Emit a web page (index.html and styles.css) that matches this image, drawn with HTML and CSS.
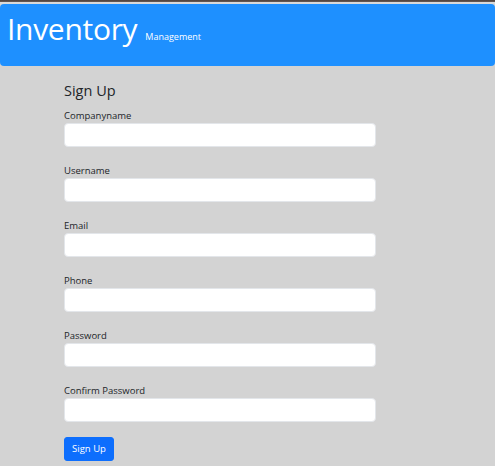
FILE: index.html
```html
<!DOCTYPE html>
<html lang="en">
<head>
<meta charset="utf-8">
<title>Inventory Management - Sign Up</title>
<link rel="stylesheet" href="styles.css">
</head>
<body>
<div class="chrome"></div>
<header class="topbar">
  <h1 class="brand">Inventory</h1>
  <span class="tagline">Management</span>
</header>
<main class="content">
  <form class="signup">
    <h2 class="title">Sign Up</h2>
    <div class="group">
      <label class="label" for="company">Companyname</label>
      <input class="field" id="company" type="text">
    </div>
    <div class="group">
      <label class="label" for="username">Username</label>
      <input class="field" id="username" type="text">
    </div>
    <div class="group">
      <label class="label" for="email">Email</label>
      <input class="field" id="email" type="email">
    </div>
    <div class="group">
      <label class="label" for="phone">Phone</label>
      <input class="field" id="phone" type="text">
    </div>
    <div class="group">
      <label class="label" for="password">Password</label>
      <input class="field" id="password" type="password">
    </div>
    <div class="group last">
      <label class="label" for="confirm">Confirm Password</label>
      <input class="field" id="confirm" type="password">
    </div>
    <button class="btn" type="button">Sign Up</button>
  </form>
</main>
</body>
</html>
```
FILE: styles.css
```css
* { box-sizing: border-box; }
html, body {
  margin: 0;
  padding: 0;
}
body {
  background: #d3d3d3;
  font-family: "Open Sans", "Noto Sans", sans-serif;
  color: #212529;
  font-size: 9.5px;
  height: 466px;
  overflow: hidden;
}
.chrome {
  height: 4px;
  background: linear-gradient(to bottom, #4b3f3b 0, #6a5c57 2px, #d9d9d9 2px, #d9d9d9 4px);
}
.topbar {
  height: 62px;
  background: #1e90ff;
  border-radius: 4px;
  display: flex;
  align-items: baseline;
  padding: 10px 0 0 7px;
  color: #ffffff;
}
.brand {
  margin: 0 8px 0 0;
  font-size: 30px;
  line-height: 1;
  font-weight: 400;
  letter-spacing: -0.3px;
}
.tagline {
  font-size: 9px;
}
.content {
  padding-top: 16px;
}
.signup {
  margin-left: 64px;
  width: 312px;
}
.title {
  margin: 0 0 8px 0;
  font-size: 14.5px;
  line-height: 18px;
  font-weight: 400;
}
.group {
  margin-bottom: 16px;
}
.group.last {
  margin-bottom: 15px;
}
.label {
  display: block;
  line-height: 15px;
  font-size: 9.5px;
}
.field {
  display: block;
  width: 100%;
  height: 24px;
  border: 1px solid #e3e6ea;
  border-radius: 4px;
  background: #ffffff;
  padding: 0 7px;
  font: inherit;
  outline: none;
}
.btn {
  display: block;
  height: 24px;
  width: 50px;
  padding: 0;
  border: 1px solid #0d6efd;
  border-radius: 3px;
  background: #0d6efd;
  color: #ffffff;
  font-family: inherit;
  font-size: 9.5px;
  line-height: 22px;
  cursor: pointer;
}
```
